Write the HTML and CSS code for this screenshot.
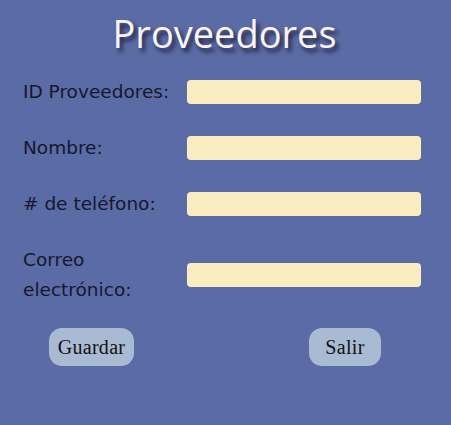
FILE: index.html
```html
<!DOCTYPE html>
<html lang="es">
<head>
<meta charset="utf-8">
<link rel="stylesheet" href="styles.css">
</head>
<body>
<div class="page">
  <h1 class="title">Proveedores</h1>
  <form class="form">
    <label class="label" for="id">ID Proveedores:</label>
    <input class="field" id="id" type="text">
    <label class="label" for="nombre">Nombre:</label>
    <input class="field" id="nombre" type="text">
    <label class="label" for="tel"># de teléfono:</label>
    <input class="field" id="tel" type="text">
    <label class="label" for="correo">Correo<br>electrónico:</label>
    <input class="field" id="correo" type="text">
  </form>
  <div class="actions">
    <button class="btn btn-save" type="button">Guardar</button>
    <button class="btn btn-exit" type="button">Salir</button>
  </div>
</div>
</body>
</html>
```

FILE: styles.css
```css
html, body {
  margin: 0;
  padding: 0;
}
body {
  background: #5b6ba5;
  width: 451px;
  height: 425px;
  overflow: hidden;
}
.page {
  display: flex;
  flex-direction: column;
}
.title {
  margin: 0;
  padding-top: 9px;
  height: 68px;
  box-sizing: border-box;
  text-align: center;
  font-family: "Open Sans", sans-serif;
  font-weight: 500;
  font-size: 38px;
  line-height: 48px;
  color: #fbf4f2;
  text-shadow: 3px 4px 4px #1e2240;
  padding-right: 2px;
}
.form {
  display: grid;
  grid-template-columns: 164px 234px;
  row-gap: 26px;
  padding-left: 23px;
  margin-top: 9px;
  align-items: center;
}
.label {
  font-family: "DejaVu Sans", sans-serif;
  font-size: 18.5px;
  line-height: 30px;
  color: #16182a;
  white-space: nowrap;
}
.field {
  height: 24px;
  box-sizing: border-box;
  border: none;
  border-radius: 4px;
  background: #faedbf;
  margin: 0;
  padding: 0 6px;
}
.actions {
  display: flex;
  justify-content: space-between;
  padding: 0 70px 0 49px;
  margin-top: 23px;
}
.btn {
  height: 38px;
  border: none;
  border-radius: 13px;
  background: #a9bbd3;
  color: #111;
  font-family: "Liberation Serif", serif;
  font-size: 20px;
  padding: 0;
  letter-spacing: 0.3px;
}
.btn-save { width: 85px; }
.btn-exit { width: 72px; }
```
